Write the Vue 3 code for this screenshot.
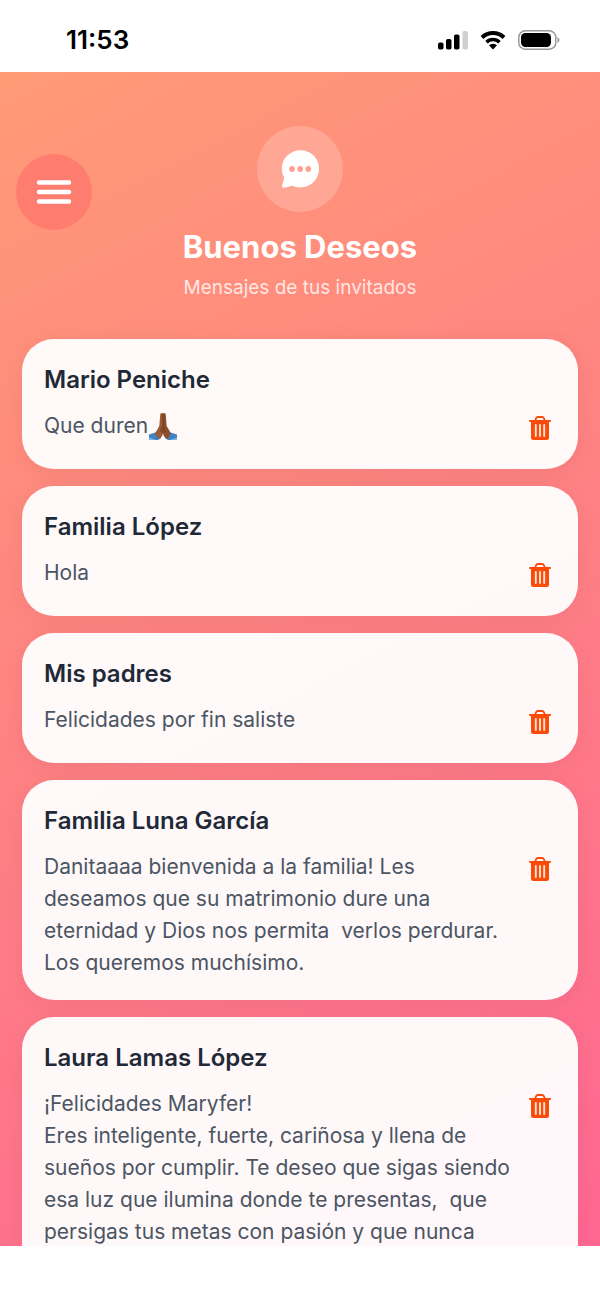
<script setup>
import { ref } from 'vue'

const messages = ref([
  { id: 1, name: 'Mario Peniche', text: 'Que duren', praying: true },
  { id: 2, name: 'Familia López', text: 'Hola' },
  { id: 3, name: 'Mis padres', text: 'Felicidades por fin saliste' },
  {
    id: 4,
    name: 'Familia Luna García',
    text: 'Danitaaaa bienvenida a la familia! Les deseamos que su matrimonio dure una eternidad y Dios nos permita  verlos perdurar. Los queremos muchísimo.',
  },
  {
    id: 5,
    name: 'Laura Lamas López',
    text: '¡Felicidades Maryfer!\nEres inteligente, fuerte, cariñosa y llena de sueños por cumplir. Te deseo que sigas siendo esa luz que ilumina donde te presentas,  que persigas tus metas con pasión y que nunca',
  },
])

function removeMessage(id) {
  messages.value = messages.value.filter((m) => m.id !== id)
}
</script>

<template>
  <div class="screen">
    <div class="status-bar">
      <span class="time">11:53</span>
      <div class="status-icons">
        <svg width="30" height="20" viewBox="0 0 30 20">
          <rect x="0" y="12.500" width="5.500" height="7" rx="1.800" />
          <rect x="8" y="9" width="5.500" height="10.500" rx="1.800" />
          <rect x="16" y="4.500" width="5.500" height="15" rx="1.800" />
          <rect x="24.500" y="1" width="5.500" height="18.500" rx="1.800" fill="#cfcfcf" />
        </svg>
        <svg width="26" height="20" viewBox="0 0 26 20">
          <path d="M2 7.500a15.700 15.700 0 0 1 22 0" fill="none" stroke="#000" stroke-width="4" />
          <path d="M6.500 12.300a9.200 9.200 0 0 1 13 0" fill="none" stroke="#000" stroke-width="3.500" />
          <path d="M13 19.500l-4-4.200a5.700 5.700 0 0 1 8 0z" />
        </svg>
        <svg width="42" height="20" viewBox="0 0 42 20">
          <rect x="0.800" y="0.800" width="37" height="18.400" rx="6.500" fill="none" stroke="#999" stroke-width="1.500" />
          <rect x="3" y="3" width="30" height="14" rx="4.500" />
          <path d="M39.500 7q2 1 2 3t-2 3z" fill="#999" />
        </svg>
      </div>
    </div>

    <main class="content">
      <header class="header">
        <button class="menu" type="button" aria-label="Menú">
          <svg width="36" height="24" viewBox="0 0 36 24">
            <path d="M3 2.500h30M3 12h30M3 21.500h30" stroke="#fff" stroke-width="4.500" stroke-linecap="round" />
          </svg>
        </button>
        <div class="heading">
          <div class="badge">
            <svg width="38" height="38" viewBox="0 0 38 38">
              <path d="M19.500 0.300C9 0.300 0.800 8.500 0.800 18.700c0 3.600 1 6.400 2.500 9.100L1.200 35.500c-.4 1.600.6 2.600 2.200 2.200l7.600-2c2.800 1.200 5.600 1.700 8.500 1.700 10.300 0 18.500-8.200 18.500-18.700S29.800 0.300 19.500 0.300z" fill="#fff" />
              <ellipse cx="11" cy="19" rx="2.800" ry="3" fill="#ffa091" />
              <ellipse cx="19.200" cy="19" rx="2.800" ry="3" fill="#ffa091" />
              <ellipse cx="27.300" cy="19" rx="2.800" ry="3" fill="#ffa091" />
            </svg>
          </div>
          <h1>Buenos Deseos</h1>
          <p>Mensajes de tus invitados</p>
        </div>
      </header>

      <ul class="list">
        <li v-for="message in messages" :key="message.id" class="card">
          <h2>{{ message.name }}</h2>
          <div class="row">
            <p class="text">{{ message.text }}<svg v-if="message.praying" class="emoji" width="28" height="28" viewBox="0 0 28 28">
              <path d="M0 22.500l8-2.500 4 3v3l-3 2H0z" fill="#3f82c4" />
              <path d="M28 22.500l-8-2.500-4 3v3l3 2h9z" fill="#3f82c4" />
              <path d="M0 25.500l7 2.500H0zM28 25.500l-7 2.500h7z" fill="#7db4e6" />
              <path d="M14 1.500c-1.500-1-2.700 0-2.800 1.500L10.300 14 6 21.500 9.500 27c2.500-1 4.300-3 4.500-6z" fill="#9a5b36" />
              <path d="M14 1.500c1.500-1 2.700 0 2.800 1.500l.9 11 4.300 7.500-3.500 5.500c-2.500-1-4.300-3-4.500-6z" fill="#8b4f2d" />
              <path d="M14 2v19" stroke="#5b321b" stroke-width="0.800" />
              <path d="M12.700 15l-1.200 5M15.300 15l1.200 5" stroke="#6b3b20" stroke-width="0.800" />
            </svg></p>
            <button class="delete" type="button" :aria-label="'Eliminar mensaje de ' + message.name" @click="removeMessage(message.id)">
              <svg width="22" height="24" viewBox="0 0 22 24">
                <path d="M6 5l1-2.600Q7.500 1 9 1h4q1.500 0 2 1.400L16 5" fill="none" stroke="#fc4a08" stroke-width="1.800" />
                <path d="M1 5h20" stroke="#fc4a08" stroke-width="2" stroke-linecap="round" />
                <path d="M2 5h18v16.500q0 2.500-2.500 2.500h-13Q2 24 2 21.500z" fill="#fc4a08" />
                <path d="M6.800 9v11M11 9v11M15.200 9v11" stroke="#ffe3d4" stroke-width="1.900" stroke-linecap="round" />
              </svg>
            </button>
          </div>
        </li>
      </ul>
    </main>
    <div class="bottom-bar"></div>
  </div>
</template>

<style>
body {
  margin: 0;
}
</style>

<style scoped>
.screen {
  display: flex;
  flex-direction: column;
  height: 100vh;
  background: #fff;
  font-family: Inter, "Liberation Sans", sans-serif;
}

.status-bar {
  display: flex;
  flex: none;
  align-items: center;
  justify-content: space-between;
  box-sizing: border-box;
  height: 72px;
  padding: 8px 40px 0 66px;
}

.time {
  font-size: 26px;
  font-weight: 600;
  line-height: 32px;
  color: #000;
}

.status-icons {
  display: flex;
  align-items: center;
  gap: 12px;
}

.content {
  flex: 1;
  min-height: 0;
  overflow: hidden;
  background: linear-gradient(153deg, #ff9a76, #ff6792);
}

.header {
  display: grid;
  grid-template-columns: 76px 1fr 76px;
  padding: 54px 16px 38px;
}

.menu {
  display: flex;
  align-items: center;
  justify-content: center;
  width: 76px;
  height: 76px;
  margin-top: 28px;
  padding: 0;
  border: none;
  border-radius: 50%;
  background: #ff7d6e;
}

.heading {
  display: flex;
  flex-direction: column;
  align-items: center;
  text-align: center;
}

.badge {
  display: flex;
  align-items: center;
  justify-content: center;
  width: 86px;
  height: 86px;
  border-radius: 50%;
  background: rgba(255, 255, 255, 0.2);
}

h1 {
  margin: 16px 0 8px;
  font-size: 31px;
  font-weight: 700;
  line-height: 38px;
  color: #fff;
}

.heading p {
  margin: 0;
  font-size: 19px;
  line-height: 27px;
  color: rgba(255, 255, 255, 0.8);
}

.list {
  display: flex;
  flex-direction: column;
  gap: 17px;
  margin: 0;
  padding: 0 22px;
  list-style: none;
}

.card {
  padding: 22px 22px 21px;
  border-radius: 32px;
  background: rgba(255, 255, 255, 0.95);
  box-shadow: 0 4px 24px rgba(0, 0, 0, 0.06);
}

.card:last-child {
  padding-bottom: 64px;
}

h2 {
  margin: 0 0 11px;
  font-size: 24px;
  font-weight: 600;
  line-height: 38px;
  color: #1f2937;
}

.row {
  display: flex;
  align-items: flex-start;
  gap: 11px;
  min-height: 38px;
}

.text {
  flex: 1;
  margin: 0;
  font-size: 21px;
  line-height: 32px;
  color: #4b5563;
  white-space: pre-wrap;
}

.emoji {
  margin-left: 1px;
  vertical-align: -7px;
}

.delete {
  display: flex;
  align-items: center;
  justify-content: center;
  width: 32px;
  height: 36px;
  padding: 0;
  border: none;
  background: none;
}

.bottom-bar {
  flex: none;
  height: 53px;
}
</style>
